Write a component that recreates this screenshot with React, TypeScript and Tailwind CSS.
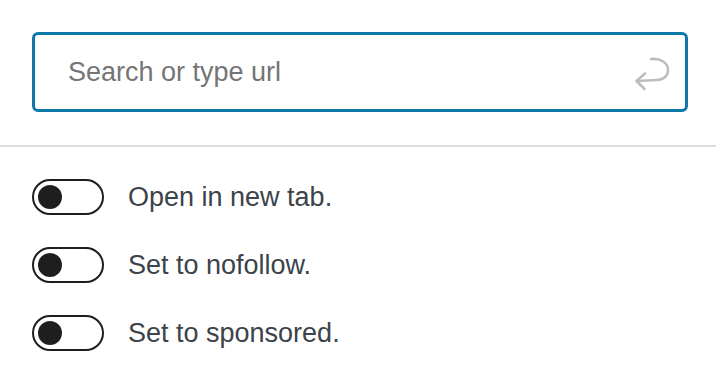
import React, { useState } from 'react';

const ReturnIcon: React.FC = () => (
    <svg width="40" height="40" viewBox="0 0 40 40" fill="none" stroke="#bdbdbd" strokeWidth="2.6" strokeLinecap="round" strokeLinejoin="round">
        <path d="M20 5 C30 4, 37 9, 37 16 C37 23, 31 26, 26 26 L6 27" />
        <path d="M14 19.5 L5.5 27 L13.5 35" />
    </svg>
);

const Toggle: React.FC<{ label: string }> = ({ label }) => {
    const [on, setOn] = useState(false);
    return (
        <label className="flex items-center h-9 cursor-pointer">
            <button
                type="button"
                onClick={() => setOn(!on)}
                className={`relative w-[72px] h-9 rounded-full border-2 shrink-0 ${on ? 'bg-[#007cba] border-[#007cba]' : 'bg-white border-[#1e1e1e]'}`}
            >
                <span className={`absolute top-[4px] left-[4px] w-6 h-6 rounded-full ${on ? 'translate-x-9 bg-white' : 'bg-[#1e1e1e]'}`} />
            </button>
            <span className="ml-6 text-[27px] leading-9 text-[#3c434a]">{label}</span>
        </label>
    );
};

const App: React.FC = () => {
    const [url, setUrl] = useState('');

    return (
        <div className="w-[716px] h-[382px] bg-white" style={{ fontFamily: '"Liberation Sans", Arial, sans-serif' }}>
            <div className="pl-8 pr-[28px] pt-8 pb-[33px] border-b-2 border-[#dddddd]">
                <div className="flex items-center h-20 border-[3px] border-[#0e78a8] rounded-[6px] pl-[33px] pr-[14px]">
                    <input
                        value={url}
                        onChange={e => setUrl(e.target.value)}
                        placeholder="Search or type url"
                        className="flex-1 text-[27px] text-[#1e1e1e] placeholder:text-[#757575] outline-none bg-transparent"
                    />
                    <div className="pt-1">
                        <ReturnIcon />
                    </div>
                </div>
            </div>
            <div className="px-8 pt-8 flex flex-col gap-8">
                <Toggle label="Open in new tab." />
                <Toggle label="Set to nofollow." />
                <Toggle label="Set to sponsored." />
            </div>
        </div>
    );
};

export default App;
